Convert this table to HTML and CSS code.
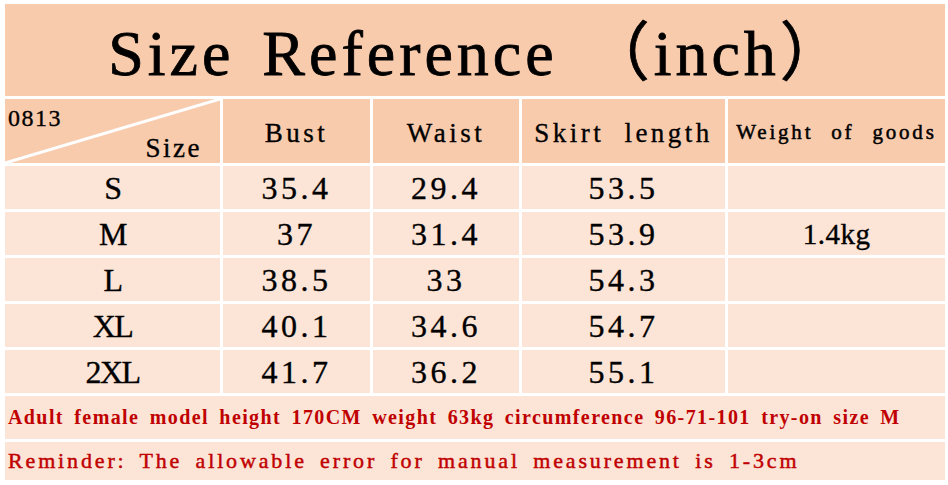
FILE: index.html
```html
<!DOCTYPE html>
<html lang="en">
<head>
<meta charset="utf-8">
<title>Size Reference</title>
<link rel="stylesheet" href="styles.css">
</head>
<body>
<div class="sheet">
  <div class="cell title"><span class="title-text">Size Reference （inch）</span></div>

  <div class="cell head corner">
    <span class="corner-code">0813</span>
    <span class="corner-size">Size</span>
  </div>
  <div class="cell head">Bust</div>
  <div class="cell head">Waist</div>
  <div class="cell head">Skirt length</div>
  <div class="cell head head-small">Weight of goods</div>

  <div class="cell size">S</div>
  <div class="cell num">35.4</div>
  <div class="cell num">29.4</div>
  <div class="cell num">53.5</div>
  <div class="cell weight"></div>

  <div class="cell size">M</div>
  <div class="cell num">37</div>
  <div class="cell num">31.4</div>
  <div class="cell num">53.9</div>
  <div class="cell weight">1.4kg</div>

  <div class="cell size">L</div>
  <div class="cell num">38.5</div>
  <div class="cell num">33</div>
  <div class="cell num">54.3</div>
  <div class="cell weight"></div>

  <div class="cell size">XL</div>
  <div class="cell num">40.1</div>
  <div class="cell num">34.6</div>
  <div class="cell num">54.7</div>
  <div class="cell weight"></div>

  <div class="cell size">2XL</div>
  <div class="cell num">41.7</div>
  <div class="cell num">36.2</div>
  <div class="cell num">55.1</div>
  <div class="cell weight"></div>

  <div class="cell note note-model">Adult female model height 170CM weight 63kg circumference 96-71-101 try-on size M</div>
  <div class="cell note note-reminder">Reminder: The allowable error for manual measurement is 1-3cm</div>
</div>
</body>
</html>
```

FILE: styles.css
```css
html, body {
  margin: 0;
  background: #ffffff;
}

body {
  padding: 4px 0 0 5px;
  font-family: "Liberation Serif", "Noto Sans CJK SC", serif;
  color: #000000;
}

.sheet {
  display: grid;
  grid-template-columns: 215px 147px 146px 203px 217px;
  grid-template-rows: 92px 64px repeat(5, 43px) 43px 38px;
  gap: 3px;
  width: 940px;
}

.cell {
  background: #fce4d6;
  display: flex;
  align-items: center;
  justify-content: center;
  white-space: nowrap;
  overflow: hidden;
  -webkit-text-stroke: 0.35px currentColor;
}

.title {
  grid-column: 1 / -1;
  background: #f8cbad;
  padding: 8px 0 0 6px;
  box-sizing: border-box;
}

.title-text {
  font-size: 64px;
  letter-spacing: 4px;
  word-spacing: 8px;
  line-height: 1;
  -webkit-text-stroke: 0.8px currentColor;
}

.head {
  background: #f8cbad;
  font-size: 27px;
  letter-spacing: 3.5px;
  word-spacing: 10px;
  padding-top: 5px;
  box-sizing: border-box;
}

.head-small {
  font-size: 21px;
  letter-spacing: 2.8px;
  padding-top: 2px;
  -webkit-text-stroke: 0.5px currentColor;
}

.corner {
  flex-direction: column;
  align-items: stretch;
  justify-content: space-between;
  padding: 7px 18px 1px 3px;
  background: linear-gradient(to bottom right,
    #f8cbad calc(50% - 2px),
    #ffffff calc(50% - 1px),
    #ffffff calc(50% + 1px),
    #f8cbad calc(50% + 2px));
}

.corner-code {
  align-self: flex-start;
  font-size: 24px;
  letter-spacing: 1.5px;
  line-height: 1;
}

.corner-size {
  align-self: flex-end;
  font-size: 27px;
  letter-spacing: 2.5px;
  line-height: 1;
}

.size {
  font-size: 32px;
  letter-spacing: -1.5px;
  padding-top: 1px;
}

.num {
  font-size: 32px;
  letter-spacing: 3.5px;
  padding-top: 1px;
}

.weight {
  font-size: 29px;
  letter-spacing: 0.5px;
  padding-top: 1px;
}

.note {
  grid-column: 1 / -1;
  justify-content: flex-start;
  color: #c00000;
  padding-left: 3px;
}

.note-model {
  font-size: 20px;
  font-weight: bold;
  letter-spacing: 1.4px;
  word-spacing: 4px;
  -webkit-text-stroke: 0;
}

.note-reminder {
  font-size: 22px;
  letter-spacing: 2.85px;
  word-spacing: 5px;
  -webkit-text-stroke: 0.45px currentColor;
}
```
